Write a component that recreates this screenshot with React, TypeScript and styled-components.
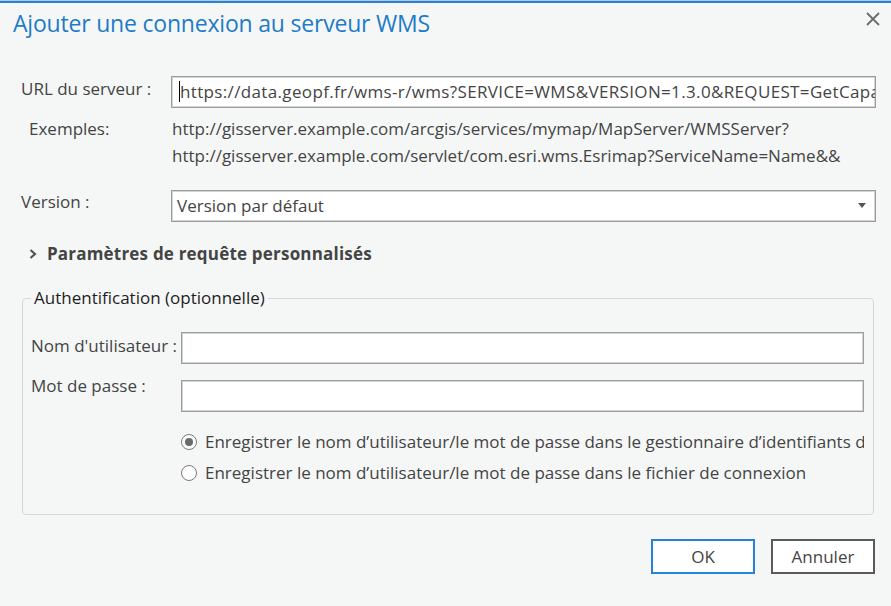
import React, { FC } from "react";
import styled, { createGlobalStyle } from "styled-components";

const GlobalStyle = createGlobalStyle`
  html, body {
    margin: 0;
    padding: 0;
    background: #f5f7f7;
  }
  body {
    font-family: "Open Sans", "Noto Sans", "Liberation Sans", sans-serif;
    color: #444;
  }
`;

const App: FC = () => {
  return (
    <>
      <GlobalStyle />
      <Dialog>
        <TopLine />
        <Header>
          <Title>Ajouter une connexion au serveur WMS</Title>
          <CloseButton aria-label="Fermer">
            <svg width="16" height="16" viewBox="0 0 16 16">
              <path d="M2 2 L14 14 M14 2 L2 14" stroke="#6b6b6b" strokeWidth="1.8" fill="none" />
            </svg>
          </CloseButton>
        </Header>

        <Body>
          <FieldRow $top={34}>
            <Label $offset={-3}>URL du serveur :</Label>
            <TextBox $spacing={0.35}>
              <Caret />
              https://data.geopf.fr/wms-r/wms?SERVICE=WMS&amp;VERSION=1.3.0&amp;REQUEST=GetCapabilities
            </TextBox>
          </FieldRow>

          <FieldRow $top={7}>
            <Label $offset={-2} $indent={8}>Exemples:</Label>
            <Examples>
              <div>http://gisserver.example.com/arcgis/services/mymap/MapServer/WMSServer?</div>
              <div>http://gisserver.example.com/servlet/com.esri.wms.Esrimap?ServiceName=Name&amp;&amp;</div>
            </Examples>
          </FieldRow>

          <FieldRow $top={21}>
            <Label $offset={-4}>Version :</Label>
            <SelectBox>
              Version par défaut
              <Arrow />
            </SelectBox>
          </FieldRow>

          <Expander>
            <svg width="10" height="12" viewBox="0 0 10 12">
              <polyline points="2.5,2 7,6 2.5,10" stroke="#555" strokeWidth="2.2" fill="none" />
            </svg>
            <span>Paramètres de requête personnalisés</span>
          </Expander>

          <Group>
            <Legend>Authentification (optionnelle)</Legend>
            <FieldRow $top={22}>
              <Label $offset={-2}>Nom d'utilisateur :</Label>
              <TextBox />
            </FieldRow>
            <FieldRow $top={16}>
              <Label $offset={-10}>Mot de passe :</Label>
              <TextBox />
            </FieldRow>
            <Options>
              <Option>
                <Radio $checked />
                <span>Enregistrer le nom d’utilisateur/le mot de passe dans le gestionnaire d’identifiants de Windows</span>
              </Option>
              <Option>
                <Radio />
                <span>Enregistrer le nom d’utilisateur/le mot de passe dans le fichier de connexion</span>
              </Option>
            </Options>
          </Group>

          <Footer>
            <Button $primary>OK</Button>
            <Button>Annuler</Button>
          </Footer>
        </Body>
      </Dialog>
    </>
  );
};

const Dialog = styled.div`
  width: 891px;
  height: 606px;
  background: #f5f7f7;
  overflow: hidden;
`;

const TopLine = styled.div`
  height: 3px;
  border-top: 1px solid #a9cbe9;
  background: #2f80cc;
  box-sizing: border-box;
`;

const Header = styled.div`
  height: 39px;
  display: flex;
  align-items: center;
  justify-content: space-between;
  padding: 0 10px 0 13px;
`;

const Title = styled.div`
  font-size: 23px;
  color: #1f7bc6;
  letter-spacing: -0.2px;
`;

const CloseButton = styled.div`
  display: flex;
  align-items: center;
  margin-top: -7px;
`;

const Body = styled.div`
  padding: 0 15px 0 21px;
`;

const FieldRow = styled.div<{ $top: number }>`
  display: grid;
  grid-template-columns: 150px 1fr;
  align-items: start;
  margin-top: ${(p) => p.$top}px;
`;

const Label = styled.div<{ $offset: number; $indent?: number }>`
  font-size: 17px;
  line-height: 24px;
  margin-top: ${(p) => 4 + p.$offset}px;
  padding-left: ${(p) => p.$indent || 0}px;
  white-space: nowrap;
`;

const TextBox = styled.div<{ $spacing?: number }>`
  height: 32px;
  box-sizing: border-box;
  background: #fff;
  border: 1px solid #9c9c9c;
  box-shadow: inset 0 0 0 1px #d4d4d4;
  font-size: 17px;
  line-height: 30px;
  letter-spacing: ${(p) => p.$spacing || 0}px;
  padding-left: 8px;
  white-space: nowrap;
  overflow: hidden;
  color: #444;
`;

const Caret = styled.span`
  display: inline-block;
  width: 1px;
  height: 21px;
  background: #000;
  vertical-align: middle;
  margin: -3px 0 0 -1px;
`;

const Examples = styled.div`
  font-size: 17px;
  line-height: 27px;
  padding-left: 1px;
`;

const SelectBox = styled(TextBox)`
  position: relative;
  padding-left: 5px;
`;

const Arrow = styled.span`
  position: absolute;
  right: 9px;
  top: 12px;
  width: 0;
  height: 0;
  border-left: 4px solid transparent;
  border-right: 4px solid transparent;
  border-top: 5px solid #555;
`;

const Expander = styled.div`
  display: flex;
  align-items: center;
  gap: 9px;
  margin-top: 20px;
  padding-left: 7px;
  font-size: 17px;
  font-weight: 700;
  letter-spacing: 0.2px;
  line-height: 24px;
  color: #444;
`;

const Group = styled.fieldset`
  margin: 20px 2px 0 1px;
  padding: 0 9px 29px 8px;
  border: 1px solid #d6d6d6;
  border-radius: 4px;
  min-width: 0;
`;

const Legend = styled.legend`
  padding: 0 3px;
  font-size: 17px;
  line-height: 24px;
  color: #1e1e1e;
`;

const Options = styled.div`
  margin: 18px 0 0 150px;
  display: flex;
  flex-direction: column;
  gap: 7px;
  overflow: hidden;
`;

const Option = styled.div`
  display: flex;
  align-items: center;
  gap: 8px;
  font-size: 17px;
  line-height: 24px;
  white-space: nowrap;
`;

const Radio = styled.span<{ $checked?: boolean }>`
  flex: none;
  width: 16px;
  height: 16px;
  box-sizing: border-box;
  border-radius: 50%;
  border: 1px solid #7a7a7a;
  background: #fff;
  position: relative;

  &::after {
    content: "";
    display: ${(p) => (p.$checked ? "block" : "none")};
    position: absolute;
    left: 3px;
    top: 3px;
    width: 8px;
    height: 8px;
    border-radius: 50%;
    background: #6a6a6a;
  }
`;

const Footer = styled.div`
  display: flex;
  justify-content: flex-end;
  gap: 16px;
  margin-top: 24px;
  padding-right: 1px;
`;

const Button = styled.div<{ $primary?: boolean }>`
  width: 104px;
  height: 35px;
  box-sizing: border-box;
  display: flex;
  align-items: center;
  justify-content: center;
  background: #fff;
  border: 2px solid ${(p) => (p.$primary ? "#2483d8" : "#5a5a5a")};
  font-size: 17px;
  color: #444;
`;

export default App;
